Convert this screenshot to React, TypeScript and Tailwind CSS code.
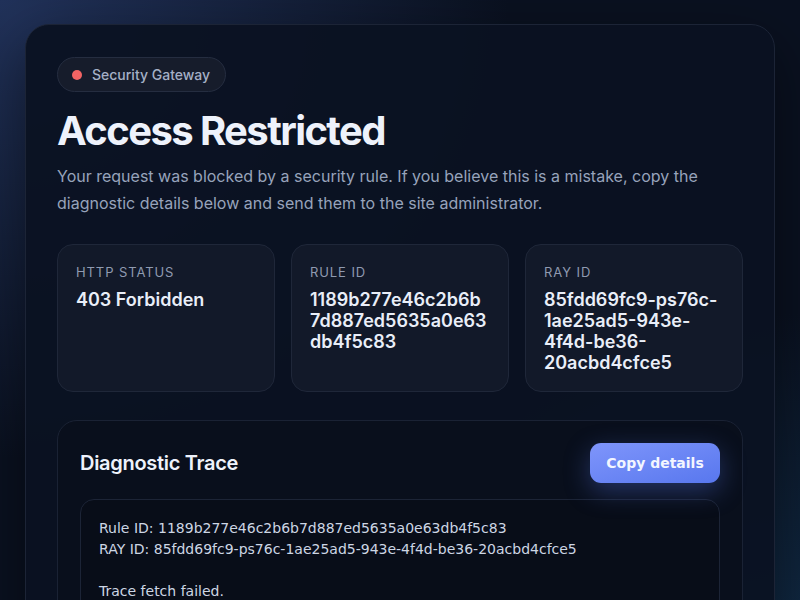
import React from "react";

const facts = [
  { label: "HTTP STATUS", value: "403 Forbidden" },
  { label: "RULE ID", value: "1189b277e46c2b6b7d887ed5635a0e63db4f5c83" },
  { label: "RAY ID", value: "85fdd69fc9-ps76c-1ae25ad5-943e-4f4d-be36-20acbd4cfce5" },
];

const trace = `Rule ID: 1189b277e46c2b6b7d887ed5635a0e63db4f5c83
RAY ID: 85fdd69fc9-ps76c-1ae25ad5-943e-4f4d-be36-20acbd4cfce5

Trace fetch failed.`;

export default function App() {
  return (
    <div
      className="min-h-screen w-full px-[25px] pt-[24px] pb-10 bg-[#0a1120]
        bg-[radial-gradient(ellipse_at_0%_0%,#21325a_0%,transparent_45%),radial-gradient(ellipse_at_100%_100%,#12304d_0%,transparent_40%)]"
      style={{ fontFamily: "Inter, 'Noto Sans', sans-serif" }}
    >
      <div className="rounded-[24px] border border-[#1c2436] bg-[#0b1222]/95 px-[31px] pt-[32px] pb-8 shadow-[0_20px_60px_rgba(0,0,0,0.45)]">
        <div className="inline-flex items-center gap-[10px] rounded-full border border-[#252d40] bg-[#161c2b] h-[35px] pl-[14px] pr-[15px]">
          <span className="w-[10px] h-[10px] rounded-full bg-[#f26464]" />
          <span className="text-[14px] font-medium text-[#a5b0c6]">Security Gateway</span>
        </div>

        <h1 className="mt-[15px] text-[40px] leading-[48px] font-bold tracking-[-0.04em] text-[#eef2fb]">
          Access Restricted
        </h1>

        <p className="mt-[8px] text-[16px] leading-[27px] text-[#97a3bb]">
          Your request was blocked by a security rule. If you believe this is a mistake, copy the
          diagnostic details below and send them to the site administrator.
        </p>

        <div className="mt-[27px] grid grid-cols-3 gap-4">
          {facts.map((f) => (
            <div
              key={f.label}
              className="h-[148px] rounded-[16px] border border-[#1f2739] bg-[#121929] px-[18px] pt-[19px]"
            >
              <div className="text-[13px] leading-[16px] tracking-[0.07em] text-[#8f9ab0]">{f.label}</div>
              <div className="mt-[9px] text-[18px] leading-[21px] font-semibold text-[#e9eef8] [overflow-wrap:anywhere]">
                {f.value}
              </div>
            </div>
          ))}
        </div>

        <div className="mt-[28px] rounded-[20px] border border-[#1a2234] bg-[#090f1c] px-[22px] pt-[22px] pb-6">
          <div className="flex items-center justify-between">
            <h2 className="text-[20px] font-semibold tracking-[-0.015em] text-[#eef2fb]">Diagnostic Trace</h2>
            <button
              className="h-[40px] w-[130px] rounded-[11px] bg-gradient-to-br from-[#7f95fb] to-[#5877ee] text-[14px] font-bold text-[#f3f6ff] shadow-[0_8px_26px_rgba(88,119,238,0.35)]"
              style={{ fontFamily: "'DejaVu Sans', sans-serif" }}
            >
              Copy details
            </button>
          </div>
          <pre
            className="mt-[16px] rounded-[14px] border border-[#1c2436] bg-[#080d18] px-[18px] pt-[18px] pb-5 text-[14px] leading-[21px] text-[#cdd6e4] whitespace-pre-wrap"
            style={{ fontFamily: "'DejaVu Sans', sans-serif" }}
          >
            {trace}
          </pre>
        </div>
      </div>
    </div>
  );
}
